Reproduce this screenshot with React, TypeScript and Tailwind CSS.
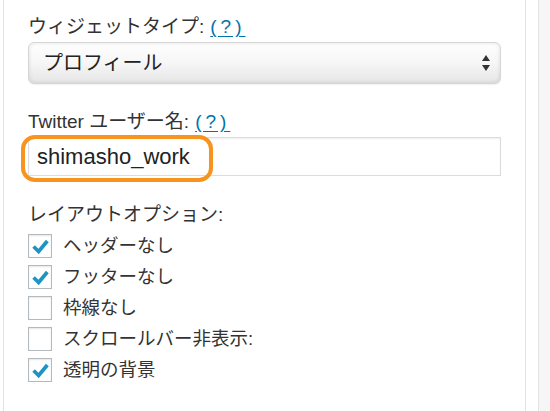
const font = 'font-["Liberation_Sans","Noto_Sans_CJK_JP",sans-serif]';

const Check = () => (
  <svg viewBox="0 0 24 24" className="w-[22px] h-[22px]">
    <path d="M5 12.5 L10.5 18 L20 6.5" fill="none" stroke="#1f93c1" strokeWidth="4" strokeLinecap="butt" strokeLinejoin="miter" />
  </svg>
);

const options = [
  { label: 'ヘッダーなし', checked: true },
  { label: 'フッターなし', checked: true },
  { label: '枠線なし', checked: false },
  { label: 'スクロールバー非表示:', checked: false },
  { label: '透明の背景', checked: true },
];

const Help = () => (
  <a className="text-[#0073aa] underline underline-offset-[3px] tracking-[4px] ml-[6px]">(?)</a>
);

export default function App() {
  return (
    <div className={`w-[550px] h-[411px] bg-white flex overflow-hidden text-[#333] ${font}`}>
      <div className="w-[3px] shrink-0" />
      <div className="w-[523px] shrink-0 border-l border-r border-[#e3e3e3] pl-[24px] pr-[24px] pt-[15px]">
        <div className="text-[19px] leading-[24px]">
          ウィジェットタイプ:
          <Help />
        </div>
        <div className="mt-[3px] h-[42px] rounded-[6px] border border-[#d6d6d6] bg-gradient-to-b from-[#ffffff] via-[#f6f6f6] to-[#e6e6e6] shadow-[inset_0_0_4px_rgba(0,0,0,0.12),0_1px_1px_rgba(0,0,0,0.06)] flex items-center pl-[14px] pr-[10px]">
          <span className="flex-1 text-[20px] leading-[24px] text-[#222]">プロフィール</span>
          <span className="flex flex-col items-center gap-[4px]">
            <span className="w-0 h-0 border-l-[4.5px] border-r-[4.5px] border-b-[6px] border-l-transparent border-r-transparent border-b-[#333]" />
            <span className="w-0 h-0 border-l-[4.5px] border-r-[4.5px] border-t-[6px] border-l-transparent border-r-transparent border-t-[#333]" />
          </span>
        </div>

        <div className="mt-[26px] text-[19px] leading-[24px]">
          Twitter ユーザー名:
          <Help />
        </div>
        <div className="relative mt-[3px] h-[39px] border border-[#dcdcdc] shadow-[inset_0_1px_2px_rgba(0,0,0,0.07)] flex items-center pl-[8px]">
          <span className="text-[22px] leading-[26px] text-[#222]">shimasho_work</span>
          <div className="absolute left-[-8px] top-[-3px] w-[192px] h-[47px] rounded-[14px] border-[4px] border-[#f7941d]" />
        </div>

        <div className="mt-[27px] text-[19px] leading-[24px]">レイアウトオプション:</div>
        <div className="mt-[7px] flex flex-col gap-[7px]">
          {options.map((o) => (
            <div key={o.label} className="flex items-center h-[24px]">
              <span className="w-[24px] h-[24px] shrink-0 border border-[#b4b9be] bg-white shadow-[inset_0_1px_2px_rgba(0,0,0,0.1)] flex items-center justify-center">
                {o.checked && <Check />}
              </span>
              <span className="ml-[11px] text-[18.5px] leading-[24px]">{o.label}</span>
            </div>
          ))}
        </div>
      </div>
      <div className="w-[12px] shrink-0" />
      <div className="w-px shrink-0 bg-[#e3e3e3]" />
      <div className="flex-1 bg-[#f6f6f6]" />
    </div>
  );
}
